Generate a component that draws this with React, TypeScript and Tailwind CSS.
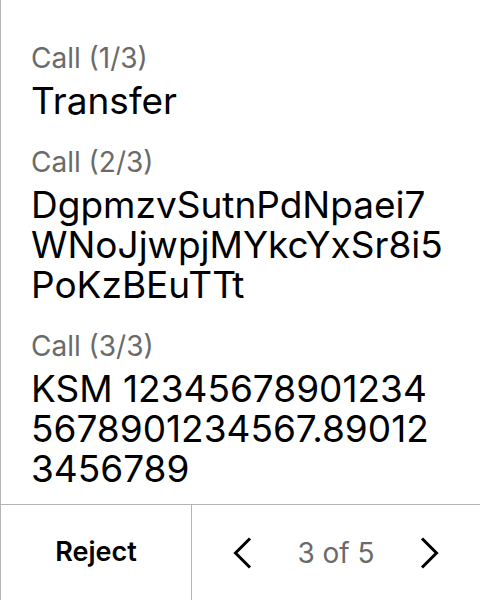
import React from "react";

export default function App() {
  return (
    <div
      className="w-[480px] h-[600px] flex flex-col bg-white border-l border-[#b5b5b5] overflow-hidden"
      style={{ fontFamily: "Inter, 'Noto Sans', sans-serif" }}
    >
      <div className="flex-1 flex flex-col gap-[25px] pl-[30px] pr-4 pt-[42px]">
        <div className="flex flex-col gap-[7px]">
          <div className="text-[28px] leading-8 text-[#6a6a6a]">Call (1/3)</div>
          <div className="text-[37px] leading-10 text-black">Transfer</div>
        </div>
        <div className="flex flex-col gap-[7px]">
          <div className="text-[28px] leading-8 text-[#6a6a6a]">Call (2/3)</div>
          <div className="text-[37px] leading-10 text-black">
            DgpmzvSutnPdNpaei7
            <br />
            WNoJjwpjMYkcYxSr8i5
            <br />
            PoKzBEuTTt
          </div>
        </div>
        <div className="flex flex-col gap-[7px]">
          <div className="text-[28px] leading-8 text-[#6a6a6a]">Call (3/3)</div>
          <div className="text-[37px] leading-10 text-black">
            KSM 12345678901234
            <br />
            5678901234567.89012
            <br />
            3456789
          </div>
        </div>
      </div>
      <div className="h-[96px] shrink-0 flex border-t border-[#b5b5b5]">
        <div className="w-[191px] border-r border-[#b5b5b5] flex items-center justify-center text-[27px] font-semibold text-black">
          Reject
        </div>
        <div className="flex-1 flex items-center justify-between px-[34px]">
          <svg width="32" height="32" viewBox="0 0 32 32" fill="none">
            <path d="M24 1.5 L9.5 16 L24 30.5" stroke="#000" strokeWidth="3" />
          </svg>
          <span className="text-[28px] text-[#6a6a6a]">3 of 5</span>
          <svg width="32" height="32" viewBox="0 0 32 32" fill="none">
            <path d="M8 1.5 L22.5 16 L8 30.5" stroke="#000" strokeWidth="3" />
          </svg>
        </div>
      </div>
    </div>
  );
}
